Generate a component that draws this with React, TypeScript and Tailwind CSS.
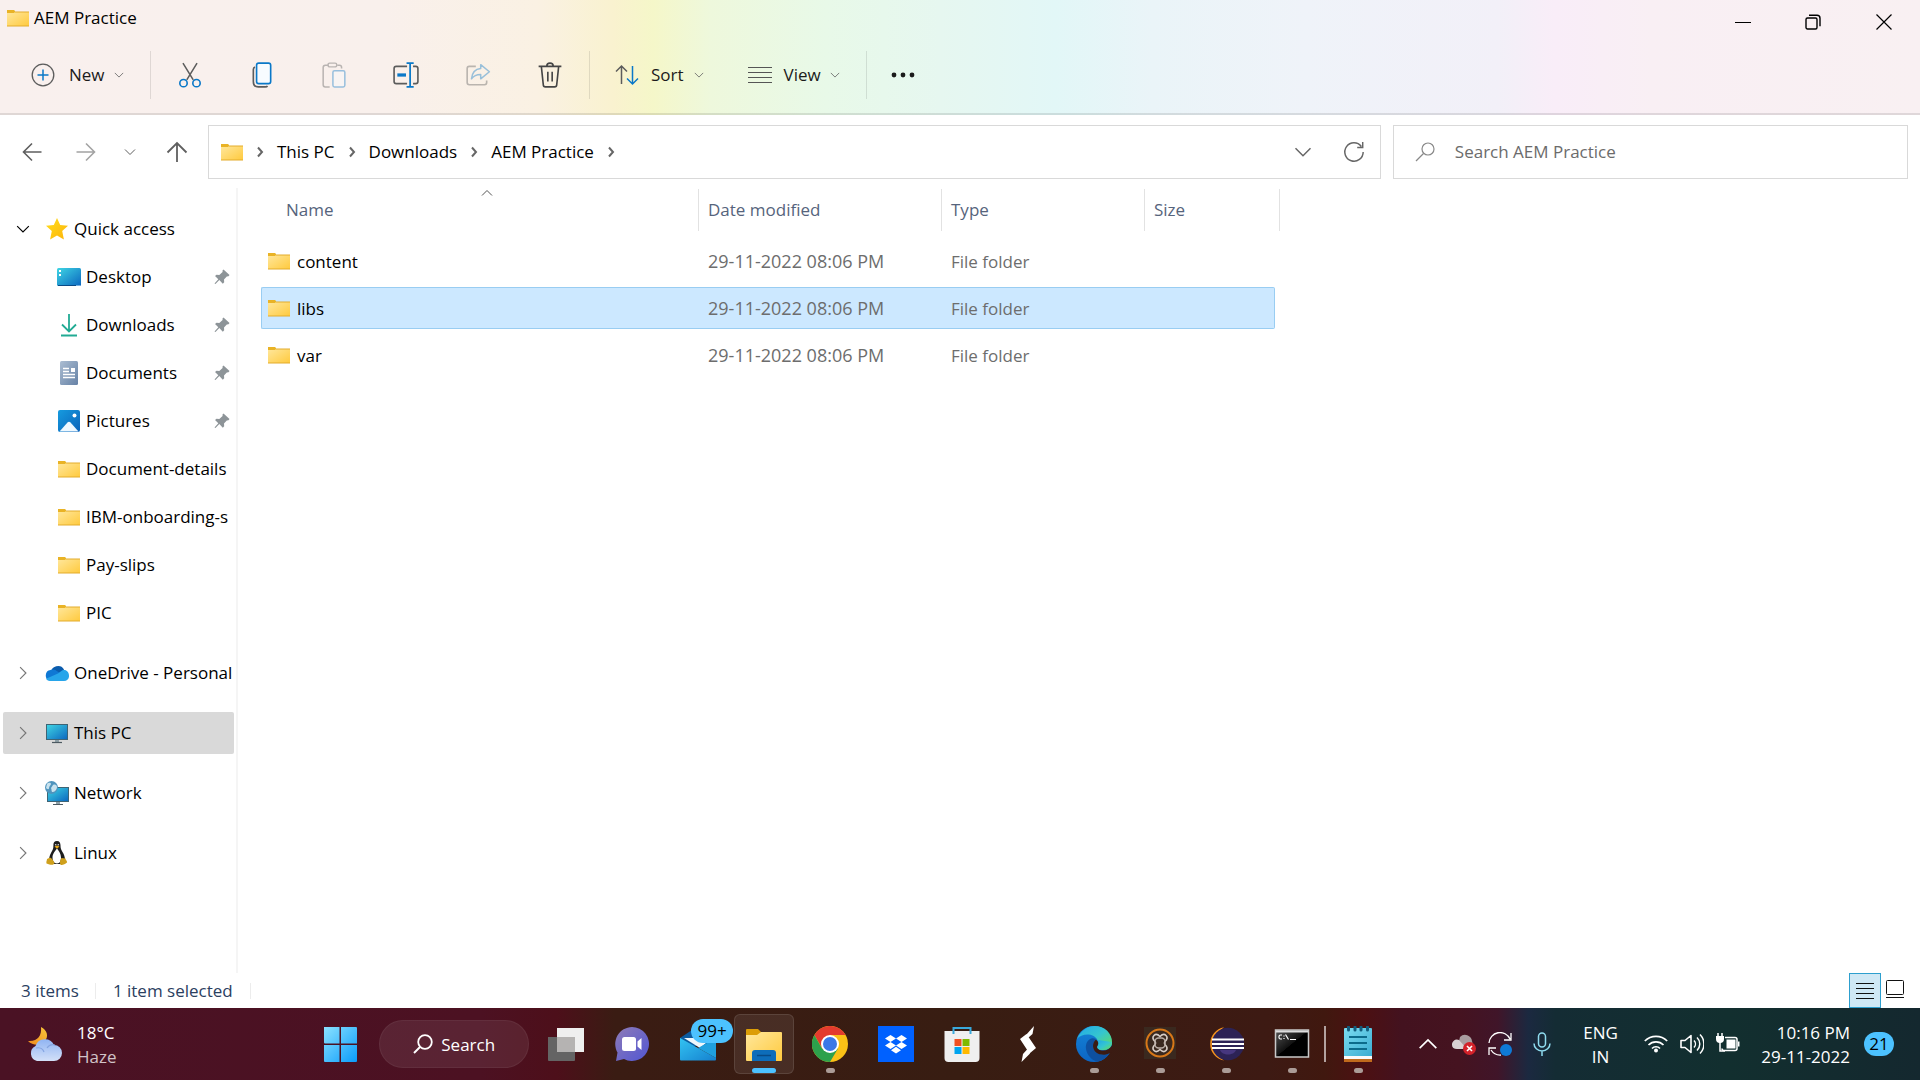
import type { ReactNode } from "react";
import clsx from "clsx";

interface IconProps {
  children: ReactNode;
  box?: string;
  className?: string;
}

function Icon({ children, box = "0 0 24 24", className = "h-6 w-6" }: IconProps) {
  return (
    <svg viewBox={box} className={clsx("shrink-0", className)} fill="none" aria-hidden="true">
      {children}
    </svg>
  );
}

/* Gradients shared by every icon on the page */
function Gradients() {
  return (
    <svg className="absolute h-0 w-0" aria-hidden="true">
      <defs>
        <linearGradient id="folder" x1="0" y1="0" x2="1" y2="1">
          <stop offset="0" stopColor="#ffe79c" />
          <stop offset="1" stopColor="#ffca3e" />
        </linearGradient>
        <linearGradient id="screen" x1="0" y1="0" x2="1" y2="1">
          <stop offset="0" stopColor="#3fd6e4" />
          <stop offset="1" stopColor="#0b66bf" />
        </linearGradient>
        <linearGradient id="star" x1="0" y1="0" x2="1" y2="1">
          <stop offset="0" stopColor="#ffdf1c" />
          <stop offset="1" stopColor="#fdb30b" />
        </linearGradient>
        <linearGradient id="paper" x1="0" y1="0" x2="1" y2="1">
          <stop offset="0" stopColor="#abbdd2" />
          <stop offset="1" stopColor="#6682a6" />
        </linearGradient>
        <linearGradient id="photo" x1="0" y1="0" x2="1" y2="1">
          <stop offset="0" stopColor="#169bdf" />
          <stop offset="1" stopColor="#0a62b9" />
        </linearGradient>
        <linearGradient id="start" x1="0" y1="0" x2="1" y2="1">
          <stop offset="0" stopColor="#8be2ff" />
          <stop offset="1" stopColor="#0a9bfa" />
        </linearGradient>
        <linearGradient id="cloud" x1="0" y1="0" x2="0" y2="1">
          <stop offset="0" stopColor="#90b4f3" />
          <stop offset="1" stopColor="#d3e0f8" />
        </linearGradient>
        <linearGradient id="moon" x1="1" y1="0" x2="0" y2="1">
          <stop offset="0" stopColor="#f9c73b" />
          <stop offset="1" stopColor="#ee8a1d" />
        </linearGradient>
        <linearGradient id="chat" x1="0" y1="0" x2="1" y2="1">
          <stop offset="0" stopColor="#8e7bb6" />
          <stop offset="1" stopColor="#5156d4" />
        </linearGradient>
        <linearGradient id="mail" x1="0" y1="0" x2="1" y2="1">
          <stop offset="0" stopColor="#33c3f2" />
          <stop offset="1" stopColor="#1581cf" />
        </linearGradient>
        <linearGradient id="edgeTop" x1="0" y1="0" x2="1" y2="1">
          <stop offset="0" stopColor="#22a7e8" />
          <stop offset="0.5" stopColor="#35c6cf" />
          <stop offset="1" stopColor="#66e04f" />
        </linearGradient>
        <linearGradient id="edgeSide" x1="0" y1="0" x2="0" y2="1">
          <stop offset="0" stopColor="#1583d6" />
          <stop offset="1" stopColor="#0c65c4" />
        </linearGradient>
        <linearGradient id="notepad" x1="0" y1="0" x2="1" y2="1">
          <stop offset="0" stopColor="#7bdcf0" />
          <stop offset="1" stopColor="#3badd2" />
        </linearGradient>
        <linearGradient id="console" x1="0" y1="0" x2="1" y2="1">
          <stop offset="0" stopColor="#555" />
          <stop offset="0.5" stopColor="#111" />
          <stop offset="0.51" stopColor="#000" />
        </linearGradient>
      </defs>
    </svg>
  );
}

function FolderIcon() {
  return (
    <Icon box="0 0 22 18" className="h-[18px] w-[22px]">
      <path d="M0 1h7l1 1v3H0z" fill="#e9b326" />
      <path d="M0 4h7l1-1h14v14H0z" fill="url(#folder)" />
      <path d="M8 3h14M0 17h22" stroke="#e3ac2c" />
    </Icon>
  );
}

function Chevron({ dir, className }: { dir: "down" | "right" | "up"; className: string }) {
  const paths = {
    down: "M1 3.5 6 8.5 11 3.5",
    right: "M3.5 1 8.5 6 3.5 11",
    up: "M1 8.5 6 3.5 11 8.5",
  };
  return (
    <Icon box="0 0 12 12" className={className}>
      <path d={paths[dir]} stroke="currentColor" />
    </Icon>
  );
}

function CrumbArrow() {
  return (
    <Icon box="0 0 12 12" className="mx-[11px] h-3 w-3">
      <path d="m4 1.5 4 4.5-4 4.5" stroke="#666" strokeWidth="2" />
    </Icon>
  );
}

function Divider() {
  return <span className="h-12 w-px bg-black/10" />;
}

interface ToolProps {
  label: string;
  disabled?: boolean;
  children: ReactNode;
}

function Tool({ label, disabled, children }: ToolProps) {
  return (
    <button
      type="button"
      aria-label={label}
      disabled={disabled}
      className={clsx("flex h-12 w-[72px] items-center justify-center", disabled && "opacity-40")}
    >
      <Icon className="h-[26px] w-[26px]">{children}</Icon>
    </button>
  );
}

function TitleBar() {
  return (
    <div className="flex h-9 justify-between">
      <h1 className="flex items-center gap-[5px] pl-[7px] text-[17px]">
        <FolderIcon />
        AEM Practice
      </h1>
      <div className="flex text-black">
        <button type="button" aria-label="Minimize" className="flex h-[43px] w-[70px] items-center justify-center">
          <Icon box="0 0 16 16" className="h-4 w-4">
            <path d="M0 8.5h16" stroke="currentColor" />
          </Icon>
        </button>
        <button type="button" aria-label="Restore" className="flex h-[43px] w-[70px] items-center justify-center">
          <Icon box="0 0 16 16" className="h-4 w-4">
            <rect x="1" y="4" width="11" height="11" rx="1.5" stroke="currentColor" strokeWidth="1.4" />
            <path d="M4 1.2h8a3 3 0 0 1 3 3v8" stroke="currentColor" strokeWidth="1.4" />
          </Icon>
        </button>
        <button type="button" aria-label="Close" className="flex h-[43px] w-[72px] items-center justify-center">
          <Icon box="0 0 16 16" className="h-4 w-4">
            <path d="m.5.5 15 15m0-15-15 15" stroke="currentColor" strokeWidth="1.2" />
          </Icon>
        </button>
      </div>
    </div>
  );
}

function Toolbar() {
  return (
    <div className="flex h-[77px] items-center pt-px text-[17px] text-[#1b1b1b]">
      <button type="button" className="flex w-[150px] items-center pl-[31px]">
        <Icon>
          <circle cx="12" cy="12" r="10.8" stroke="#5c5c5c" strokeWidth="1.3" />
          <path d="M12 6.5v11M6.5 12h11" stroke="#0a78c8" strokeWidth="1.5" />
        </Icon>
        <span className="pr-[9px] pl-[14px]">New</span>
        <Chevron dir="down" className="h-[10px] w-[10px] text-[#666]" />
      </button>
      <Divider />
      <div className="flex px-[3px]">
        <Tool label="Cut">
          <path d="M5.5 1 15 16.5M18.5 1 9 16.5" stroke="#5c5c5c" strokeWidth="1.4" />
          <circle cx="6" cy="19.5" r="3.4" stroke="#0a78c8" strokeWidth="1.5" />
          <circle cx="18" cy="19.5" r="3.4" stroke="#0a78c8" strokeWidth="1.5" />
        </Tool>
        <Tool label="Copy">
          <path d="M5.5 4.5C4.3 5 4 5.7 4 7v11c0 3 1.5 5 4.5 5H15c1 0 1.8-.5 2-1" stroke="#5c5c5c" strokeWidth="1.5" />
          <rect x="7" y="1" width="13" height="19" rx="2" fill="#f7fbff" stroke="#0a78c8" strokeWidth="1.5" />
        </Tool>
        <Tool label="Paste" disabled>
          <path d="M7 3H4a2 2 0 0 0-2 2v16a2 2 0 0 0 2 2h4M15 3h2a2 2 0 0 1 2 2v1" stroke="#5c5c5c" strokeWidth="1.4" />
          <rect x="6.500" y="1" width="8" height="3.500" rx="1.5" stroke="#5c5c5c" strokeWidth="1.3" />
          <rect x="11" y="8" width="11" height="15" rx="1.5" fill="#f7fbff" stroke="#0a78c8" strokeWidth="1.4" />
        </Tool>
        <Tool label="Rename">
          <path
            d="M13 4H3a2 2 0 0 0-2 2v12a2 2 0 0 0 2 2h10M18.5 4H21a2 2 0 0 1 2 2v12a2 2 0 0 1-2 2h-2.5"
            stroke="#5c5c5c"
            strokeWidth="1.5"
          />
          <path d="M4 12h8" stroke="#0a78c8" strokeWidth="3" />
          <path d="M15.8 1v22M12.5 1h6.600M12.5 23h6.600" stroke="#0a78c8" strokeWidth="1.6" />
        </Tool>
        <Tool label="Share" disabled>
          <path d="M10 4H4a2 2 0 0 0-2 2v13a2 2 0 0 0 2 2h14a2 2 0 0 0 2-2v-2" stroke="#5c5c5c" strokeWidth="1.5" />
          <path
            d="M14.5 2.5 22.5 9l-8 6.5v-4c-4 0-6.5 1-8.5 4C6.5 10.500 9 6.500 14.500 6z"
            stroke="#0a78c8"
            strokeWidth="1.4"
            strokeLinejoin="round"
          />
        </Tool>
        <Tool label="Delete">
          <path
            d="M1.5 4h21M4 4l1.800 17a2 2 0 0 0 2 2h8.400a2 2 0 0 0 2-2L20 4M9 4a3 3 0 0 1 6 0M10 9v9M14 9v9"
            stroke="#454545"
            strokeWidth="1.5"
          />
        </Tool>
      </div>
      <Divider />
      <button type="button" className="flex items-center pr-11 pl-[25px]">
        <Icon>
          <path d="M6.5 21V3M1 8.500 6.500 3 12 8.500" stroke="#5c5c5c" strokeWidth="1.5" />
          <path d="M17.5 3v18M12 15.500l5.500 5.500 5.500-5.500" stroke="#0a78c8" strokeWidth="1.5" />
        </Icon>
        <span className="pr-[10px] pl-3">Sort</span>
        <Chevron dir="down" className="h-[10px] w-[10px] text-[#666]" />
      </button>
      <button type="button" className="flex items-center pr-[26px]">
        <Icon>
          <path d="M0 4.5h24M0 9.500h24M0 14.500h24M0 19.500h24" stroke="#555" strokeWidth="1.2" />
        </Icon>
        <span className="pr-[9px] pl-3">View</span>
        <Chevron dir="down" className="h-[10px] w-[10px] text-[#666]" />
      </button>
      <Divider />
      <button type="button" aria-label="See more" className="pl-6">
        <Icon>
          <circle cx="3" cy="12" r="2.4" fill="#1b1b1b" />
          <circle cx="12" cy="12" r="2.4" fill="#1b1b1b" />
          <circle cx="21" cy="12" r="2.4" fill="#1b1b1b" />
        </Icon>
      </button>
    </div>
  );
}

function Crumb({ label }: { label: string }) {
  return (
    <li className="flex items-center">
      <a href="#" className="text-black">
        {label}
      </a>
      <CrumbArrow />
    </li>
  );
}

function AddressRow() {
  return (
    <div className="flex h-[69px] pt-[10px] pr-3 text-[17px]">
      <div className="flex h-[54px] w-[208px] shrink-0 items-center text-[#5f5f5f]">
        <button type="button" aria-label="Back" className="pl-[22px]">
          <Icon box="0 0 20 20" className="h-5 w-5">
            <path d="M19.5 10H1.500M10 1.500 1.500 10l8.500 8.500" stroke="currentColor" strokeWidth="1.6" />
          </Icon>
        </button>
        <button type="button" aria-label="Forward" className="pl-[34px] text-[#a3a3a3]">
          <Icon box="0 0 20 20" className="h-5 w-5">
            <path d="M.5 10h18M10 1.500l8.500 8.500-8.500 8.500" stroke="currentColor" strokeWidth="1.6" />
          </Icon>
        </button>
        <button type="button" aria-label="Recent locations" className="pl-7">
          <Chevron dir="down" className="h-3 w-3" />
        </button>
        <button type="button" aria-label="Up" className="pl-[30px]">
          <Icon box="0 0 22 22" className="h-[22px] w-[22px]">
            <path d="M11 21V2M1.500 11.500 11 2l9.500 9.500" stroke="currentColor" strokeWidth="1.8" />
          </Icon>
        </button>
      </div>
      <div className="flex h-[54px] flex-1 items-center border border-[#d9d9d9] pl-3">
        <FolderIcon />
        <CrumbArrow />
        <ol className="flex flex-1">
          <Crumb label="This PC" />
          <Crumb label="Downloads" />
          <Crumb label="AEM Practice" />
        </ol>
        <button type="button" aria-label="Previous locations" className="pr-[31px] text-[#666]">
          <Chevron dir="down" className="h-[18px] w-[18px]" />
        </button>
        <button type="button" aria-label="Refresh" className="pr-[15px]">
          <Icon className="h-[22px] w-[22px]">
            <path d="M20 6a10 10 0 1 0 2 6M21.500 1v6h-6" stroke="#666" strokeWidth="1.6" />
          </Icon>
        </button>
      </div>
      <label className="ml-3 flex h-[54px] w-[27%] items-center border border-[#d9d9d9] pl-[21px]">
        <Icon box="0 0 20 20" className="h-5 w-5">
          <circle cx="13" cy="7" r="6" stroke="#888" strokeWidth="1.2" />
          <path d="M8.500 11.500 1 19" stroke="#888" strokeWidth="1.2" />
        </Icon>
        <input
          type="search"
          aria-label="Search AEM Practice"
          placeholder="Search AEM Practice"
          className="min-w-0 flex-1 pl-5 outline-none placeholder:text-[#6b6b6b]"
        />
      </label>
    </div>
  );
}

function Pin() {
  return (
    <Icon box="0 0 16 16" className="mr-[6px] h-4 w-4">
      <path
        d="M9.500.5 15.500 6l-1 1.200-1.700.2-2.800 3 .2 2.800-1.400 1.500-3.500-3.600L1.500 15l-1-.5 3.800-4.200L1 7l1.500-1.300 2.800.2L8.600 3l-.1-1.500z"
        fill="#8d9498"
      />
    </Icon>
  );
}

const placeIcons: Record<string, ReactNode> = {
  star: (
    <path
      d="m12 1 3.200 7 7.800.8-5.800 5.200 1.700 8.500L12 18.500l-6.900 4L6.800 14 1 8.800 8.800 8z"
      fill="url(#star)"
    />
  ),
  desktop: (
    <>
      <rect y="3" width="24" height="18" rx="1.5" fill="url(#screen)" />
      <path d="M2 5h2v2H2zM2 9h2v2H2z" fill="#fff" />
      <path d="M1 20.500h18" stroke="#094a86" />
      <path d="M19.500 20.500h4" stroke="#d8efff" strokeDasharray="1 1" />
    </>
  ),
  downloads: <path d="M12 1v17M5 11.500l7 7 7-7M4 22.500h16" stroke="#22ab94" strokeWidth="1.8" />,
  documents: (
    <>
      <rect x="3" width="18" height="24" rx="1.5" fill="url(#paper)" />
      <path d="M6 7.500h6M6 10.500h6M6 13.500h12M6 16.500h12" stroke="#fff" strokeWidth="1.3" />
      <path d="M14 7h4v4h-4z" fill="#fff" />
    </>
  ),
  pictures: (
    <>
      <rect x="1" y="1" width="22" height="22" rx="2" fill="url(#photo)" />
      <path d="M2.500 22.500 10.500 13.500q1.500-1.500 3 0L21.500 22.500z" fill="#eef8ff" />
      <circle cx="17.5" cy="6.5" r="2" fill="#fff" />
    </>
  ),
  onedrive: (
    <>
      <path d="M6 12a7 7 0 0 1 13-3.500l-3 6z" fill="#0a5cad" />
      <path d="M5.500 9c3-1 5 0 7 1.500l7 4L5 19.800A5.500 5.500 0 0 1 5.500 9z" fill="#0f78d4" />
      <path d="M13 12.500 17 9.500c4-1.500 7 1.500 7 5.200a5 5 0 0 1-5 5.300H5.500c-2 0-3.500-1-4.500-2.300z" fill="#27a5ea" />
    </>
  ),
  pc: (
    <>
      <rect x="1.5" y="3.5" width="21" height="15" fill="url(#screen)" stroke="#3e6475" />
      <path d="M10 19h4v2.500h-4z" fill="#8fa0a8" />
      <path d="M7 21.500h10" stroke="#4c5961" strokeWidth="1.2" />
    </>
  ),
  network: (
    <>
      <rect x="2.5" y="6.5" width="21" height="14" fill="url(#screen)" stroke="#3e6475" />
      <path d="M11 21h4v2h-4z" fill="#8fa0a8" />
      <path d="M8 23.500h10" stroke="#4c5961" />
      <circle cx="6.5" cy="6.5" r="6.5" fill="#4f94bd" />
      <path d="M2 3c2-2 4-1 4 0S4 5 4 7 2 8 1 7zM8 4c2-1 4 0 4 2s-2 5-4 5-1-2-2-4z" fill="#c8e2ee" />
    </>
  ),
  linux: (
    <>
      <path
        d="M12 0c-2.800 0-3.800 2-3.600 4.500C8.500 8 7.500 9 6 12c-1.300 2.500-2 5-2 7l4 4h8l4-4c0-3-1-6-2.500-8-1.500-2.500-2-4-2-6.500C15.500 2 14.500 0 12 0z"
        fill="#1d1d1d"
      />
      <path d="M12 7.500c1.500 2 4 5 4 9 0 3-1 6-4 6s-4.500-3-4.500-6c0-4 3-7 4.500-9z" fill="#fff" />
      <path d="M9.500 5.500 12 4.500l2.500 1-2.500 2.300z" fill="#e6a717" />
      <circle cx="10.7" cy="3.7" r=".8" fill="#ddd" />
      <circle cx="13.3" cy="3.7" r=".8" fill="#ddd" />
      <path
        d="M5 16.500c2.500 1 3.500 3.500 4.500 5.500-.5 2.500-4 2-8 .5-.5-2 .5-3 .5-4.500zM16.500 17l4 .5c0 1.500 2 2.500 1.500 4-2 1.500-4.500 3-6.500 2.300-1-2-.5-5 1-6.800z"
        fill="#cfa01c"
      />
    </>
  ),
};

interface Place {
  label: string;
  icon: string;
  pinned?: boolean;
}

const quickAccess: Place[] = [
  { label: "Desktop", icon: "desktop", pinned: true },
  { label: "Downloads", icon: "downloads", pinned: true },
  { label: "Documents", icon: "documents", pinned: true },
  { label: "Pictures", icon: "pictures", pinned: true },
  { label: "Document-details", icon: "folder" },
  { label: "IBM-onboarding-s", icon: "folder" },
  { label: "Pay-slips", icon: "folder" },
  { label: "PIC", icon: "folder" },
];

const roots: Place[] = [
  { label: "OneDrive - Personal", icon: "onedrive" },
  { label: "This PC", icon: "pc" },
  { label: "Network", icon: "network" },
  { label: "Linux", icon: "linux" },
];

function Sidebar() {
  return (
    <nav
      aria-label="Folders"
      className="mt-1 w-[238px] shrink-0 border-r-2 border-[#f5f5f5] pt-5 text-[17px] whitespace-nowrap text-black"
    >
      <button type="button" aria-expanded="true" className="flex h-[42px] w-full items-center pl-4">
        <Chevron dir="down" className="mr-[15px] h-[14px] w-[14px] text-black" />
        <Icon className="mr-[5px] h-6 w-6">{placeIcons.star}</Icon>
        Quick access
      </button>
      <ul className="mt-[3px]">
        {quickAccess.map((place) => (
          <li key={place.label}>
            <a href="#" className="flex h-12 items-center gap-[5px] overflow-hidden pl-[57px]">
              <span className="flex w-6 shrink-0 justify-center">
                {place.icon === "folder" ? <FolderIcon /> : <Icon>{placeIcons[place.icon]}</Icon>}
              </span>
              <span className="flex-1">{place.label}</span>
              {place.pinned && <Pin />}
            </a>
          </li>
        ))}
      </ul>
      <ul className="mt-[15px] flex flex-col gap-[18px] pr-[2px] pl-[3px]">
        {roots.map((root) => (
          <li key={root.label}>
            <button
              type="button"
              aria-expanded="false"
              className={clsx(
                "flex h-[42px] w-full items-center rounded-xs pl-[13px]",
                root.label === "This PC" && "bg-[#d9d9d9]",
              )}
            >
              <Chevron dir="right" className="mr-[15px] h-[14px] w-[14px] text-[#777]" />
              <Icon className="mr-[5px] h-6 w-6">{placeIcons[root.icon]}</Icon>
              {root.label}
            </button>
          </li>
        ))}
      </ul>
    </nav>
  );
}

const files = [
  { name: "content", modified: "29-11-2022 08:06 PM", type: "File folder" },
  { name: "libs", modified: "29-11-2022 08:06 PM", type: "File folder" },
  { name: "var", modified: "29-11-2022 08:06 PM", type: "File folder" },
];

const columns = [
  { label: "Name", width: "w-[438px]", inner: "pl-[25px]" },
  { label: "Date modified", width: "w-[243px]", inner: "pl-[9px]" },
  { label: "Type", width: "w-[203px]", inner: "pl-[9px]" },
  { label: "Size", width: "w-[130px]", inner: "pl-[9px] -mr-[5px]" },
];

function FileList() {
  return (
    <main className="min-w-0 flex-1 pl-[23px] text-[17px]">
      <table className="table-fixed border-separate border-spacing-x-0 border-spacing-y-[5px] text-left">
        <thead>
          <tr>
            {columns.map((col) => (
              <th key={col.label} className={clsx("h-[46px] p-0 align-top font-normal text-[#56647c]", col.width)}>
                <div className={clsx("relative flex h-[42px] items-center border-r border-[#e2e2e2]", col.inner)}>
                  {col.label === "Name" && (
                    <Chevron dir="up" className="absolute -top-[2px] left-[220px] h-3 w-3 text-[#555]" />
                  )}
                  {col.label}
                </div>
              </th>
            ))}
          </tr>
        </thead>
        <tbody>
          {files.map((file) => {
            const cell = file.name === "libs" ? "border-[#99cdf2] bg-[#cce8ff]" : "border-transparent";
            return (
              <tr key={file.name} className="text-[#6d6d6d]">
                <td className={clsx("h-[42px] rounded-l-xs border-y border-l p-0", cell)}>
                  <span className="flex items-center gap-[7px] pl-[6px] text-black">
                    <FolderIcon />
                    <span className="pt-[2px]">{file.name}</span>
                  </span>
                </td>
                <td className={clsx("border-y p-0 pl-[9px] text-[18px]", cell)}>{file.modified}</td>
                <td className={clsx("border-y p-0 pt-[2px] pl-[9px]", cell)}>{file.type}</td>
                <td className={clsx("rounded-r-xs border-y border-r p-0", cell)} />
              </tr>
            );
          })}
        </tbody>
      </table>
    </main>
  );
}

function StatusBar() {
  return (
    <footer className="flex h-[35px] items-center text-[17px] text-[#2b405f]">
      <span className="pr-4 pl-[21px]">3 items</span>
      <span className="h-4 w-px bg-[#ececec]" />
      <span className="px-[17px]">1 item selected</span>
      <span className="h-4 w-px bg-[#ececec]" />
      <button
        type="button"
        aria-label="Details view"
        className="ml-auto flex h-[35px] w-8 items-center justify-center border border-[#2d9fce] bg-[#cfe8f5]"
      >
        <Icon box="0 0 18 18" className="h-[18px] w-[18px]">
          <path d="M0 1.500h18M0 6.500h18M0 11.500h18M0 16.500h18" stroke="#111" />
        </Icon>
      </button>
      <button
        type="button"
        aria-label="Large icons view"
        className="flex h-[35px] items-center pr-4 pb-1 pl-[5px]"
      >
        <Icon box="0 0 18 18" className="h-[18px] w-[18px]">
          <rect x=".5" y=".5" width="17" height="14" rx="1" stroke="#111" />
          <path d="M0 17.500h18" stroke="#111" />
        </Icon>
      </button>
    </footer>
  );
}

interface TaskApp {
  name: string;
  icon: ReactNode;
  running?: boolean;
  active?: boolean;
}

const apps: TaskApp[] = [
  {
    name: "Task View",
    icon: (
      <>
        <path d="M9 2h27v24H9z" fill="#efefef" />
        <path d="M0 11h27v23a1 1 0 0 1-1 1H1a1 1 0 0 1-1-1z" fill="#646464" />
        <path d="M9 11h18v15H9z" fill="#b5b3b2" />
      </>
    ),
  },
  {
    name: "Chat",
    icon: (
      <>
        <path d="M18 1a17 17 0 1 1-8 32L2 35l1.500-8.500A17 17 0 0 1 18 1z" fill="url(#chat)" />
        <rect x="8" y="11" width="14" height="14" rx="2.5" fill="#fff" />
        <path d="m23.500 15.500 4-3.500v12l-4-3.500z" fill="#fff" />
      </>
    ),
  },
  {
    name: "Mail",
    icon: (
      <>
        <path d="M0 12 18 0l18 12v8H0z" fill="#0c5b9e" />
        <path d="M4 12h28l-12 10z" fill="#eff7fb" />
        <path d="M0 12l36 20v1.500a1 1 0 0 1-1 1H1a1 1 0 0 1-1-1z" fill="url(#mail)" />
        <path d="M36 12v20L18 22z" fill="#1fa0df" />
      </>
    ),
  },
  {
    name: "File Explorer",
    active: true,
    running: true,
    icon: (
      <>
        <path d="M0 4a1 1 0 0 1 1-1h11l3 3v6H0z" fill="#dc9d06" />
        <path d="M0 9h11l4-3h20a1 1 0 0 1 1 1v27a1 1 0 0 1-1 1H1a1 1 0 0 1-1-1z" fill="url(#folder)" />
        <path d="M6 35V27a3 3 0 0 1 3-3h18a3 3 0 0 1 3 3v8z" fill="#0d6dba" />
        <path d="M11 29.500h14" stroke="#084a86" strokeWidth="1.5" />
      </>
    ),
  },
  {
    name: "Google Chrome",
    running: true,
    icon: (
      <>
        <circle cx="18" cy="18" r="18" fill="#fbc116" />
        <path d="M2.400 9A18 18 0 0 1 33.600 9H18l-8 13z" fill="#e33b2e" />
        <path d="M2.400 9A18 18 0 0 0 18 36l8-13.500H10z" fill="#2da14c" />
        <circle cx="18" cy="18" r="9" fill="#fff" />
        <circle cx="18" cy="18" r="7" fill="#3b78e7" />
      </>
    ),
  },
  {
    name: "Dropbox",
    icon: (
      <>
        <path d="M0 0h36v36H0z" fill="#0061ff" />
        <path
          d="m12.500 9 5.500 3.500-5.500 3.500L7 12.500zM23.500 9l5.500 3.500-5.500 3.500-5.500-3.500zM12.500 16l5.500 3.500-5.500 3.500L7 19.500zM23.500 16l5.500 3.500-5.500 3.500-5.500-3.500zM18 20.800l5 3.400-5 3.400-5-3.400z"
          fill="#fff"
        />
      </>
    ),
  },
  {
    name: "Microsoft Store",
    icon: (
      <>
        <path d="M.5 5h35v27a4 4 0 0 1-4 4h-27a4 4 0 0 1-4-4z" fill="#efefef" />
        <path d="M9.500 8V2h17v6" stroke="#39a9dc" strokeWidth="2" />
        <path d="M10.500 13h7v7h-7z" fill="#f05022" />
        <path d="M18.500 13h7v7h-7z" fill="#7fba00" />
        <path d="M10.500 21h7v7h-7z" fill="#00a4ef" />
        <path d="M18.500 21h7v7h-7z" fill="#ffb900" />
      </>
    ),
  },
  {
    name: "STS",
    icon: (
      <path d="M24 0 22.500 8l-4.500 4-2-3zM10 13l6.500-5L26 22l-6.500 5.500zM11.500 36 13 28l4.500-5 2.500 4.500z" fill="#fff" />
    ),
  },
  {
    name: "Microsoft Edge",
    running: true,
    icon: (
      <>
        <circle cx="18" cy="18" r="18" fill="url(#edgeSide)" />
        <path
          d="M1 13C5 4 12 0 18.500 0 29 0 36 7.500 36 16c0 5-4 8-9 8-4 0-6-1.500-5.500-3.500 1.500-2 1.500-4 0-6.500C17 6 5 8 1 13z"
          fill="url(#edgeTop)"
        />
        <path d="M20 13c-6-3-11 3-10 10 1 6 6 12 12 12.500 5-1 9-4 11.500-8.500C25 31 17 27.500 17 20c0-3 1-5 3-7z" fill="#0e50a0" />
        <path
          d="M20 13.500c3 2.500 2.500 5 1 7-.5 2.500 3 4 6 4 4 0 7-2 9-5v7l-2 .5C27 31 17 28 17 20c0-3 1-5 3-6.500z"
          fill="#3b1b13"
        />
        <path d="M21.500 14c2 2.500 1.500 4.500.2 6.500-.7 2 1.800 3.500 5.300 3.500 5 0 9-3 9-8z" fill="url(#edgeTop)" />
      </>
    ),
  },
  {
    name: "AEM Quickstart",
    running: true,
    icon: (
      <>
        <path d="M2 1h32v32H2z" fill="#3a291f" />
        <circle cx="18" cy="17" r="13.5" stroke="#d87818" strokeWidth="2" />
        <path
          d="M18 10.500c2-2 4.500-2.500 6-1s1 4-1 6c-.8 1-.8 2 0 3 2 2 2.500 4.500 1 6s-4 1-6-1c-2 2-4.500 2.500-6 1s-1-4 1-6c.8-1 .8-2 0-3-2-2-2.500-4.500-1-6s4-1 6 1z"
          stroke="#d8cdc5"
          strokeWidth="1.6"
        />
        <rect x="13" y="12" width="10" height="10" rx="3.5" stroke="#b9ada5" strokeWidth="1.4" />
      </>
    ),
  },
  {
    name: "Eclipse",
    running: true,
    icon: (
      <>
        <path d="M16 1.200A17 17 0 0 0 16 34.600a20 20 0 0 1 0-33.400z" fill="#f7941e" />
        <circle cx="20" cy="18" r="16.2" fill="#2c2255" />
        <path d="M12 24h16c-2 6-14 6-16 0z" fill="#47377f" />
        <path d="M4 13.500h32M4 18h32M4 22h32" stroke="#fff" strokeWidth="2" />
      </>
    ),
  },
  {
    name: "Command Prompt",
    running: true,
    icon: (
      <>
        <path d="M1.500 4h33v27h-33z" fill="url(#console)" stroke="#c9c9c9" strokeWidth="1.5" />
        <path d="M2 5.500h32" stroke="#dedede" strokeWidth="2" />
        <path
          d="M8 9H6.500a1.500 1.500 0 0 0-1.500 1.500v1A1.500 1.500 0 0 0 6.500 13H8M10 9.500v1M10 12v1M11.500 8.500l3 5M16 13.500h6"
          stroke="#fff"
          strokeWidth="1.2"
        />
      </>
    ),
  },
  {
    name: "Notepad",
    running: true,
    icon: (
      <>
        <path d="M4 30h28v6H4z" fill="#c06a1c" />
        <path d="M4 28h28v5H4z" fill="#fafafa" />
        <path d="M4 3a1 1 0 0 1 1-1h26a1 1 0 0 1 1 1v27H4z" fill="url(#notepad)" />
        <path d="M9 11h18M9 17h18M9 23h18" stroke="#0c6b8b" strokeWidth="1.8" />
        <path d="M8.500 1v3M15 1v3M21 1v3M27.500 1v3" stroke="#125d7d" strokeWidth="3" strokeLinecap="round" />
      </>
    ),
  },
];

function TaskButton({ app }: { app: TaskApp }) {
  return (
    <button
      type="button"
      aria-label={app.name}
      className={clsx(
        "relative mx-[3px] flex h-[60px] w-[60px] items-center justify-center rounded-md border",
        app.active ? "border-white/10 bg-white/8" : "border-transparent",
      )}
    >
      <Icon box="0 0 36 36" className="h-9 w-9">
        {app.icon}
      </Icon>
      {app.name === "Mail" && (
        <span className="absolute top-1 -right-[6px] flex h-6 w-[42px] items-center justify-center rounded-full bg-[#4cc2ff] text-[17px] text-black">
          99+
        </span>
      )}
      {app.running && (
        <span
          className={clsx(
            "absolute bottom-0 h-[5px] rounded-full",
            app.active ? "w-6 bg-[#4cc2ff]" : "w-[9px] bg-[#ab9c97]",
          )}
        />
      )}
    </button>
  );
}

function Tray() {
  return (
    <div className="ml-auto flex items-center pr-[26px] text-[17px] leading-6 text-white">
      <button type="button" aria-label="Show hidden icons" className="flex w-9 justify-center">
        <Chevron dir="up" className="h-5 w-5" />
      </button>
      <button type="button" aria-label="OneDrive" className="flex w-9 justify-center">
        <Icon>
          <path d="M8 5a7 7 0 0 1 12 4l2 8H5z" fill="#a99da0" />
          <path d="M0 13a5 5 0 0 1 7-5l8 9H5c-3 0-5-1.500-5-4z" fill="#d9d2d3" />
          <circle cx="17.5" cy="16.5" r="6.5" fill="#d3222a" />
          <path d="m15 14 5 5m0-5-5 5" stroke="#fff" strokeWidth="1.6" />
        </Icon>
      </button>
      <button type="button" aria-label="Sync" className="flex w-9 justify-center">
        <Icon>
          <path d="M1 11A11 11 0 0 1 22 7M23 1v7h-7M1 23v-7h7M3 18a11 11 0 0 0 10 5" stroke="#fff" strokeWidth="1.3" />
          <circle cx="18" cy="18" r="6" fill="#0e7ad6" />
        </Icon>
      </button>
      <button type="button" aria-label="Microphone" className="flex w-[47px] justify-center">
        <Icon>
          <rect x="8.5" y="1" width="7" height="14" rx="3.5" stroke="#8fdcf0" strokeWidth="1.5" />
          <path d="M4 11.500a8 7.500 0 0 0 16 0M12 19v5" stroke="#8fdcf0" strokeWidth="1.5" />
        </Icon>
      </button>
      <button type="button" className="w-[73px] pt-[2px] pr-[2px] text-center">
        ENG
        <br />
        IN
      </button>
      <button type="button" aria-label="Network, volume and battery" className="flex">
        <span className="flex w-9 justify-center">
          <Icon>
            <path
              d="M.8 9a16 16 0 0 1 22.400 0M4.500 13a10.500 10.500 0 0 1 15 0M8 16.500a5.500 5.500 0 0 1 8 0"
              stroke="#fff"
              strokeWidth="1.7"
            />
            <circle cx="12" cy="18.5" r="2" fill="#fff" />
          </Icon>
        </span>
        <span className="flex w-9 justify-center">
          <Icon>
            <path d="M1 8.500h4l6-5v17l-6-5H1z" stroke="#fff" strokeWidth="1.6" strokeLinejoin="round" />
            <path
              d="M14 8.500a5 5 0 0 1 0 7M17 5.500a9 9 0 0 1 0 13M20 2.500a13.500 13.500 0 0 1 0 19"
              stroke="#fff"
              strokeWidth="1.5"
            />
          </Icon>
        </span>
        <span className="flex w-9 justify-center">
          <Icon>
            <path d="M9 5.500h10a2 2 0 0 1 2 2v9a2 2 0 0 1-2 2H8a2 2 0 0 1-2-2" stroke="#fff" strokeWidth="1.5" />
            <path d="M10.500 7.500h9v9h-9zM22 9.500h1.500v5H22zM0 4h8v3a3.500 3.500 0 0 1-8 0z" fill="#fff" />
            <path d="M2 1v3M6 1v3M4 10v9h5" stroke="#fff" strokeWidth="1.5" />
          </Icon>
        </span>
      </button>
      <button type="button" className="w-[104px] pt-[2px] text-right whitespace-nowrap">
        10:16 PM
        <br />
        29-11-2022
      </button>
      <span className="ml-[14px] flex h-6 w-[30px] items-center justify-center rounded-full bg-[#4cc2ff] text-black">
        21
      </span>
    </div>
  );
}

function Taskbar() {
  return (
    <div className="flex h-[72px] items-center bg-[linear-gradient(90deg,#4a1224_0%,#4c1122_25%,#4d0f1a_29%,#3a1c13_32%,#381d12_50%,#3d1a13_66%,#40180f_69%,#4c1012_71%,#43121f_73%,#451320_76%,#401529_78%,#1b2940_79.6%,#142c34_81%,#122f2f_90%,#14282f_100%)]">
      <button
        type="button"
        className="flex w-[16%] items-center gap-[15px] pl-7 text-left text-[17px] leading-6 text-white"
      >
        <Icon box="0 0 34 36" className="h-9 w-[34px]">
          <path d="M13 1c6 3 8 9 4 14-4 5-12 5-17 0 9 1 14-5 13-14z" fill="url(#moon)" />
          <path d="M9 35a8 8 0 0 1-1.500-15A10 10 0 0 1 26 19a8 8 0 0 1 0 16z" fill="url(#cloud)" />
          <path d="M8 22c4-1 7 1 8 4M19 22c2-3 5-4 8-3" stroke="#86a5e0" strokeWidth="1.2" />
        </Icon>
        <span className="pt-[2px]">
          18°C
          <br />
          <span className="text-white/75">Haze</span>
        </span>
      </button>
      <div className="flex items-center">
        <button type="button" aria-label="Start" className="flex w-[66px] justify-center">
          <Icon box="0 0 34 36" className="h-9 w-[34px]">
            <path
              d="M1 1h15.500v16.500H2a1 1 0 0 1-1-1zM18 1h15a1 1 0 0 1 1 1v15.500H18zM1 19h15.500v17H2a1 1 0 0 1-1-1zM18 19h16v16a1 1 0 0 1-1 1H18z"
              fill="url(#start)"
            />
          </Icon>
        </button>
        <button
          type="button"
          className="mr-1 ml-[6px] flex h-12 w-[150px] items-center justify-center gap-2 rounded-full border border-white/5 bg-white/8 text-[17px] text-white"
        >
          <Icon box="0 0 20 20" className="h-5 w-5">
            <circle cx="12" cy="8" r="6.8" stroke="#fff" strokeWidth="1.8" />
            <path d="m7 13-6 6" stroke="#fff" strokeWidth="2" />
          </Icon>
          <span className="pt-[2px]">Search</span>
        </button>
        {apps.slice(0, -1).map((app) => (
          <TaskButton key={app.name} app={app} />
        ))}
        <span className="-mx-px h-9 w-[2px] bg-white/60" />
        <TaskButton app={apps[apps.length - 1]} />
      </div>
      <Tray />
    </div>
  );
}

export default function App() {
  return (
    <div className="flex min-h-screen flex-col bg-white font-['Open_Sans','Noto_Sans',sans-serif] text-black">
      <Gradients />
      <header className="border-b-2 border-black/10 bg-[linear-gradient(90deg,#f9f0ee_0%,#f9f0ec_20%,#faf1e3_28%,#f9f2cf_32%,#f5f7c9_34%,#eef8dc_37%,#e8f9e8_43%,#e6f7f0_49%,#e2f7f7_55%,#eaf4f8_60%,#eff3f9_68%,#f2f0f8_78%,#f9edf8_81%,#f9eff4_86%,#f9f0f2_100%)]">
        <TitleBar />
        <Toolbar />
      </header>
      <AddressRow />
      <div className="flex flex-1">
        <Sidebar />
        <FileList />
      </div>
      <StatusBar />
      <Taskbar />
    </div>
  );
}
